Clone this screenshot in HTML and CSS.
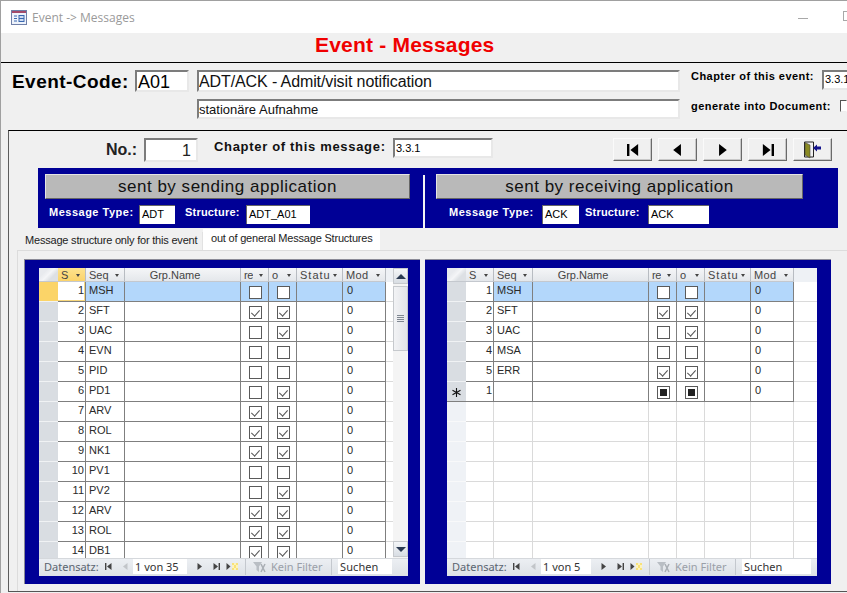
FILE: index.html
```html
<!DOCTYPE html>
<html lang="en">
<head>
<meta charset="utf-8">
<title>Event -> Messages</title>
<link rel="stylesheet" href="styles.css">
</head>
<body>
<svg class="defs" width="0" height="0" aria-hidden="true">
  <symbol id="first" viewBox="0 0 7 7"><path d="M0 0h1.400v7H0zM6.500 0v7L2 3.500z"/></symbol>
  <symbol id="prev" viewBox="0 0 5 7"><path d="M4.500 0v7L0 3.500z"/></symbol>
  <symbol id="next" viewBox="0 0 5 7"><path d="M.5 0v7L5 3.500z"/></symbol>
  <symbol id="last" viewBox="0 0 7 7"><path d="M5.600 0H7v7H5.600zM.5 0v7L5 3.500z"/></symbol>
  <symbol id="newrec" viewBox="0 0 13 7"><path d="M.5 0v7L4.500 3.500z" fill="#444"/><path d="M6 0h2v2H6zM10 0h2v2h-2zM8 2h2v3H8zM6 5h2v2H6zM10 5h2v2h-2z" fill="#f8e27a"/><path d="M8 0h2v2H8zM6 2h2v3H6zM10 2h2v3h-2zM8 5h2v2H8z" fill="#fdf3bd"/></symbol>
  <symbol id="funnel" viewBox="0 0 14 14"><path d="M1 2h9L7 6.500V12L4.500 10V6.500z" fill="#b9bec4"/><path d="M9 4l4 8M13 4l-4 8" stroke="#a9aeb4" stroke-width="1.500" fill="none"/></symbol>
</svg>
<div class="window">
  <div class="titlebar">
    <svg class="appicon" width="16" height="15" viewBox="0 0 16 15"><rect x=".5" y=".5" width="15" height="14" fill="#eef3fb" stroke="#6f7fa8"/><rect x="1" y="1" width="14" height="2" fill="#a34a6a"/><path d="M3 6h3M3 8.500h3M3 11h3" stroke="#3a68b0"/><rect x="8" y="5.500" width="5" height="6" fill="#cfdcf2" stroke="#3a68b0"/><path d="M8 8.500h5" stroke="#3a68b0"/></svg>
    <span class="wintitle">Event -&gt; Messages</span>
    <span class="minimize"></span>
    <span class="maximize"></span>
  </div>
  <header class="formhead"><h1>Event - Messages</h1></header>
  <section class="event">
    <label class="code-label">Event-Code:</label>
    <div class="field code-field">A01</div>
    <div class="desc-col">
      <div class="field desc-main">ADT/ACK - Admit/visit notification</div>
      <div class="field desc-sub">stationäre Aufnahme</div>
    </div>
    <div class="meta-col">
      <div class="meta-row"><label class="meta-label meta-ch">Chapter of this event:</label><div class="field meta-field">3.3.1</div></div>
      <div class="meta-row meta-gen"><label class="meta-label meta-doc">generate into Document:</label><span class="doc-check"></span></div>
    </div>
  </section>
  <main class="panel">
    <div class="toprow">
      <label class="no-label">No.:</label>
      <div class="field no-field">1</div>
      <label class="chap-label">Chapter of this message:</label>
      <div class="field chap-field">3.3.1</div>
      <div class="navbtns">
        <button class="btn"><svg class="bi"><use href="#first"/></svg></button>
        <button class="btn"><svg class="bi bi-s"><use href="#prev"/></svg></button>
        <button class="btn"><svg class="bi bi-s"><use href="#next"/></svg></button>
        <button class="btn"><svg class="bi"><use href="#last"/></svg></button>
        <button class="btn"><svg width="22" height="18" viewBox="0 0 22 18"><path d="M2.500 1h9v15h-9z" fill="none" stroke="#222"/><path d="M3 1.500l5 2.500v13l-5-3z" fill="#8a8a22" stroke="#444" stroke-width=".6"/><path d="M11 7l4-3.500v2h4v3h-4v2z" fill="#12128c"/></svg></button>
      </div>
    </div>
    <div class="band">
      <div class="side side-l">
        <div class="sidebtn sidebtn-l">sent by sending application</div>
        <div class="siderow">
          <label class="wlabel wl-1">Message Type:</label><div class="mini mf-1">ADT</div>
          <label class="wlabel wl-2">Structure:</label><div class="mini mf-2">ADT_A01</div>
        </div>
      </div>
      <div class="sep"></div>
      <div class="side side-r">
        <div class="sidebtn sidebtn-r">sent by receiving application</div>
        <div class="siderow siderow-r">
          <label class="wlabel wl-3">Message Type:</label><div class="mini mf-3">ACK</div>
          <label class="wlabel wl-4">Structure:</label><div class="mini mf-4">ACK</div>
        </div>
      </div>
    </div>
    <div class="tabs">
      <div class="tab">Message structure only for this event</div>
      <div class="tab tab-on">out of general Message Structures</div>
    </div>
    <div class="page">
      <div class="pane pane-l">
        <div class="grid grid-l">
          <div class="gbody">
            <table class="dt">
              <colgroup><col class="c0"><col class="c1"><col class="c2"><col class="c3"><col class="c4"><col class="c4"><col class="c5"><col class="c6"></colgroup>
              <thead><tr><th class="corner"></th><th class="th-on"><span class="h">S</span><i></i></th><th><span class="h">Seq</span><i></i></th><th class="ctr"><span class="h">Grp.Name</span></th><th><span class="h n">re</span><i></i></th><th><span class="h n">o</span><i></i></th><th><span class="h st">Statu</span><i></i></th><th><span class="h md">Mod</span><i></i></th></tr></thead>
              <tbody>
                <tr class="cur"><td class="sel sel-on"></td><td class="num num-on">1</td><td>MSH</td><td></td><td class="chk"><span class="cb"></span></td><td class="chk"><span class="cb"></span></td><td></td><td>0</td></tr>
                <tr><td class="sel"></td><td class="num">2</td><td>SFT</td><td></td><td class="chk"><span class="cb on"></span></td><td class="chk"><span class="cb on"></span></td><td></td><td>0</td></tr>
                <tr><td class="sel"></td><td class="num">3</td><td>UAC</td><td></td><td class="chk"><span class="cb"></span></td><td class="chk"><span class="cb on"></span></td><td></td><td>0</td></tr>
                <tr><td class="sel"></td><td class="num">4</td><td>EVN</td><td></td><td class="chk"><span class="cb"></span></td><td class="chk"><span class="cb"></span></td><td></td><td>0</td></tr>
                <tr><td class="sel"></td><td class="num">5</td><td>PID</td><td></td><td class="chk"><span class="cb"></span></td><td class="chk"><span class="cb"></span></td><td></td><td>0</td></tr>
                <tr><td class="sel"></td><td class="num">6</td><td>PD1</td><td></td><td class="chk"><span class="cb"></span></td><td class="chk"><span class="cb on"></span></td><td></td><td>0</td></tr>
                <tr><td class="sel"></td><td class="num">7</td><td>ARV</td><td></td><td class="chk"><span class="cb on"></span></td><td class="chk"><span class="cb on"></span></td><td></td><td>0</td></tr>
                <tr><td class="sel"></td><td class="num">8</td><td>ROL</td><td></td><td class="chk"><span class="cb on"></span></td><td class="chk"><span class="cb on"></span></td><td></td><td>0</td></tr>
                <tr><td class="sel"></td><td class="num">9</td><td>NK1</td><td></td><td class="chk"><span class="cb on"></span></td><td class="chk"><span class="cb on"></span></td><td></td><td>0</td></tr>
                <tr><td class="sel"></td><td class="num">10</td><td>PV1</td><td></td><td class="chk"><span class="cb"></span></td><td class="chk"><span class="cb"></span></td><td></td><td>0</td></tr>
                <tr><td class="sel"></td><td class="num">11</td><td>PV2</td><td></td><td class="chk"><span class="cb"></span></td><td class="chk"><span class="cb on"></span></td><td></td><td>0</td></tr>
                <tr><td class="sel"></td><td class="num">12</td><td>ARV</td><td></td><td class="chk"><span class="cb on"></span></td><td class="chk"><span class="cb on"></span></td><td></td><td>0</td></tr>
                <tr><td class="sel"></td><td class="num">13</td><td>ROL</td><td></td><td class="chk"><span class="cb on"></span></td><td class="chk"><span class="cb on"></span></td><td></td><td>0</td></tr>
                <tr><td class="sel"></td><td class="num">14</td><td>DB1</td><td></td><td class="chk"><span class="cb on"></span></td><td class="chk"><span class="cb on"></span></td><td></td><td>0</td></tr>
              </tbody>
            </table>
            <div class="filler filler-l"><div class="filler-head"></div></div>
            <div class="scroll">
              <div class="sb-btn"><span class="tri-up"></span></div>
              <div class="sb-thumb"><span class="grip"></span></div>
              <div class="sb-btn sb-down"><span class="tri-down"></span></div>
            </div>
          </div>
          <div class="gnav">
            <span class="nl">Datensatz:</span>
            <svg class="ni ni-first"><use href="#first"/></svg>
            <svg class="ni ni-prev"><use href="#prev"/></svg>
            <span class="nf nf-l">1 von 35</span>
            <svg class="ni ni-next"><use href="#next"/></svg>
            <svg class="ni ni-last"><use href="#last"/></svg>
            <svg class="ni ni-new"><use href="#newrec"/></svg>
            <span class="nsep"></span>
            <svg class="ni ni-fun"><use href="#funnel"/></svg>
            <span class="nk">Kein Filter</span>
            <span class="nsep"></span>
            <span class="ns ns-l">Suchen</span>
          </div>
        </div>
      </div>
      <div class="pane pane-r">
        <div class="grid grid-r">
          <div class="gbody">
            <table class="dt">
              <colgroup><col class="c0"><col class="c1"><col class="c2"><col class="c3"><col class="c4"><col class="c4"><col class="c5"><col class="c6"></colgroup>
              <thead><tr><th class="corner"></th><th><span class="h">S</span><i></i></th><th><span class="h">Seq</span><i></i></th><th class="ctr"><span class="h">Grp.Name</span></th><th><span class="h n">re</span><i></i></th><th><span class="h n">o</span><i></i></th><th><span class="h st">Statu</span><i></i></th><th><span class="h md">Mod</span><i></i></th></tr></thead>
              <tbody>
                <tr class="cur"><td class="sel"></td><td class="num">1</td><td>MSH</td><td></td><td class="chk"><span class="cb"></span></td><td class="chk"><span class="cb"></span></td><td></td><td>0</td></tr>
                <tr><td class="sel"></td><td class="num">2</td><td>SFT</td><td></td><td class="chk"><span class="cb on"></span></td><td class="chk"><span class="cb on"></span></td><td></td><td>0</td></tr>
                <tr><td class="sel"></td><td class="num">3</td><td>UAC</td><td></td><td class="chk"><span class="cb"></span></td><td class="chk"><span class="cb on"></span></td><td></td><td>0</td></tr>
                <tr><td class="sel"></td><td class="num">4</td><td>MSA</td><td></td><td class="chk"><span class="cb"></span></td><td class="chk"><span class="cb"></span></td><td></td><td>0</td></tr>
                <tr><td class="sel"></td><td class="num">5</td><td>ERR</td><td></td><td class="chk"><span class="cb on"></span></td><td class="chk"><span class="cb on"></span></td><td></td><td>0</td></tr>
                <tr><td class="sel star"><svg class="star-i" width="9" height="9" viewBox="0 0 9 9"><path d="M4.500 0v9M.5 2.200l8 4.600M8.500 2.200l-8 4.600" stroke="#111" stroke-width="1.100" fill="none"/></svg></td><td class="num">1</td><td></td><td></td><td class="chk"><span class="cb mix"></span></td><td class="chk"><span class="cb mix"></span></td><td></td><td>0</td></tr>
                <tr class="blank"><td class="sel"></td><td></td><td></td><td></td><td></td><td></td><td></td><td></td></tr>
                <tr class="blank"><td class="sel"></td><td></td><td></td><td></td><td></td><td></td><td></td><td></td></tr>
                <tr class="blank"><td class="sel"></td><td></td><td></td><td></td><td></td><td></td><td></td><td></td></tr>
                <tr class="blank"><td class="sel"></td><td></td><td></td><td></td><td></td><td></td><td></td><td></td></tr>
                <tr class="blank"><td class="sel"></td><td></td><td></td><td></td><td></td><td></td><td></td><td></td></tr>
                <tr class="blank"><td class="sel"></td><td></td><td></td><td></td><td></td><td></td><td></td><td></td></tr>
                <tr class="blank"><td class="sel"></td><td></td><td></td><td></td><td></td><td></td><td></td><td></td></tr>
                <tr class="blank"><td class="sel"></td><td></td><td></td><td></td><td></td><td></td><td></td><td></td></tr>
              </tbody>
            </table>
            <div class="filler"><div class="filler-head"></div></div>
          </div>
          <div class="gnav">
            <span class="nl">Datensatz:</span>
            <svg class="ni ni-first"><use href="#first"/></svg>
            <svg class="ni ni-prev"><use href="#prev"/></svg>
            <span class="nf nf-r">1 von 5</span>
            <svg class="ni ni-next"><use href="#next"/></svg>
            <svg class="ni ni-last"><use href="#last"/></svg>
            <svg class="ni ni-new"><use href="#newrec"/></svg>
            <span class="nsep"></span>
            <svg class="ni ni-fun"><use href="#funnel"/></svg>
            <span class="nk">Kein Filter</span>
            <span class="nsep"></span>
            <span class="ns ns-r">Suchen</span>
          </div>
        </div>
      </div>
    </div>
  </main>
</div>
</body>
</html>
```
FILE: styles.css
```css
* { box-sizing: border-box; }
html, body { margin: 0; padding: 0; }
body { width: 847px; height: 593px; overflow: hidden; background: #f0f0f0; font-family: "Liberation Sans", Arial, sans-serif; color: #000; }
.defs { display: block; height: 0; }
.window { width: 847px; height: 593px; overflow: hidden; border-top: 1px solid #a0a0a0; border-left: 1px solid #a0a0a0; background: #f0f0f0; }

.titlebar { height: 32px; background: #fff; display: flex; align-items: center; padding-left: 10px; }
.titlebar > * { flex: none; }
.wintitle { margin-left: 5px; font: 12px "Open Sans", sans-serif; color: #9a9a9a; width: 766px; margin-top: 1px; }
.minimize { width: 10px; height: 1px; background: #a8a8a8; margin-left: 0; margin-top: 2px; }
.maximize { width: 10px; height: 10px; border: 1px solid #a8a8a8; margin-left: 35px; margin-top: -2px; }

.formhead { height: 30px; border-bottom: 1px solid #000; padding-left: 314px; background: #f0f0f0; }
.formhead h1 { margin: 0; font-size: 21px; line-height: 23px; letter-spacing: .2px; font-weight: bold; color: #f00000; }

.event { height: 67px; display: flex; padding: 7px 0 0 11px; align-items: flex-start; }
.event > * { flex: none; }
.field { background: #fff; border: 2px solid; border-color: #7c7c7c #e8e8e8 #e8e8e8 #7c7c7c; white-space: nowrap; overflow: hidden; flex: none; }
.code-label { width: 123px; font-weight: bold; font-size: 19px; letter-spacing: .45px; line-height: 24px; }
.code-field { width: 54px; height: 22px; font-size: 18px; line-height: 21px; padding-left: 1px; }
.desc-col { margin-left: 8px; width: 483px; display: flex; flex-direction: column; gap: 7px; }
.desc-main { height: 22px; font-size: 16px; line-height: 20px; letter-spacing: -.11px; color: #111; }
.desc-sub { height: 20px; font-size: 13px; line-height: 18px; color: #111; }
.meta-col { margin-left: 11px; width: 156px; display: flex; flex-direction: column; }
.meta-row { display: flex; }
.meta-row > * { flex: none; }
.meta-gen { margin-top: 10px; }
.meta-label { font-size: 11px; font-weight: bold; line-height: 13px; letter-spacing: .45px; white-space: nowrap; }
.meta-ch { width: 131px; }
.meta-doc { width: 149px; }
.meta-field { width: 25px; height: 20px; font-size: 11px; line-height: 15px; padding-left: 1px; border-right: 0; }
.doc-check { width: 7px; height: 12px; background: #fff; border: 1px solid; border-color: #555 transparent #eee #555; }

.panel { margin-left: 7px; height: 462px; border-left: 1px solid #5c5c5c; border-top: 1px solid #000; border-bottom: 1px solid #555; background: #f0f0f0; }
.toprow { height: 37px; padding: 7px 0 0 97px; display: flex; align-items: flex-start; }
.toprow > * { flex: none; }
.no-label { width: 38px; font-size: 16px; font-weight: bold; line-height: 23px; color: #222; }
.no-field { width: 54px; height: 24px; font-size: 16px; line-height: 22px; text-align: right; padding-right: 5px; color: #222; }
.chap-label { margin-left: 16px; width: 179px; font-size: 13px; font-weight: bold; letter-spacing: .68px; line-height: 17px; white-space: nowrap; color: #111; }
.chap-field { width: 100px; height: 20px; font-size: 11px; line-height: 17px; padding-left: 1px; }
.navbtns { margin-left: 120px; display: flex; gap: 6px; }
.btn { width: 39px; height: 23px; padding: 0; background: #f0f0f0; border: 1px solid; border-color: #fafafa #6a6a6a #6a6a6a #fafafa; box-shadow: inset -1px -1px 0 #c8c8c8; display: flex; align-items: center; justify-content: center; }
.bi { width: 12px; height: 12px; fill: #000; }
.bi-s { width: 9px; }

.band { margin-left: 29px; width: 800px; height: 60px; background: #000096; display: flex; }
.side { padding-top: 6px; flex: none; }
.side-l { width: 385px; padding-left: 7px; }
.side-r { width: 413px; padding-left: 11px; }
.sep { width: 2px; height: 53px; margin-top: 7px; background: #f4f4f4; flex: none; }
.sidebtn { height: 25px; background: #b9b9b9; border: 1px solid; border-color: #e4e4e4 #666 #666 #e4e4e4; text-align: center; font-size: 17px; line-height: 23px; letter-spacing: .52px; color: #111; }
.sidebtn-l { width: 365px; }
.sidebtn-r { width: 367px; }
.siderow { margin-top: 6px; padding-left: 4px; display: flex; height: 19px; }
.siderow > * { flex: none; }
.siderow-r { padding-left: 13px; }
.wlabel { font-size: 11px; font-weight: bold; color: #fff; line-height: 15px; letter-spacing: .5px; white-space: nowrap; }
.wl-1 { width: 90px; }
.wl-2 { width: 61px; margin-left: 10px; letter-spacing: .2px; }
.wl-3 { width: 93px; }
.wl-4 { width: 63px; margin-left: 6px; letter-spacing: .2px; }
.mini { height: 19px; background: #fff; border-left: 1px solid #666; border-top: 1px solid #666; font-size: 11px; line-height: 17px; padding-left: 2px; }
.mf-1 { width: 36px; }
.mf-2 { width: 64px; }
.mf-3 { width: 37px; }
.mf-4 { width: 61px; }

.tabs { height: 22px; margin-left: 11px; display: flex; align-items: flex-end; }
.tab { flex: none; width: 183px; height: 18px; font-size: 11px; letter-spacing: -.2px; line-height: 17px; padding-left: 5px; white-space: nowrap; color: #222; border-right: 1px solid #e2e2e2; }
.tab-on { width: 177px; height: 21px; background: #fff; line-height: 19px; padding-left: 8px; border-right: 0; }

.page { margin-left: 8px; height: 341px; border-top: 1px solid #dcdcdc; border-left: 1px solid #dcdcdc; display: flex; gap: 5px; padding: 8px 0 0 6px; }
.pane { height: 325px; flex: none; background: #000096; border-top: 1px solid #8a8a96; padding-top: 8px; }
.pane-l { width: 396px; border-left: 1px solid #8a8a96; padding-left: 14px; }
.pane-r { width: 406px; padding-left: 22px; }
.grid { height: 308px; background: #fff; display: flex; flex-direction: column; }
.grid-l { width: 369px; }
.grid-r { width: 370px; }
.gbody { height: 290px; flex: none; overflow: hidden; display: flex; align-items: flex-start; background-image: linear-gradient(to top, #dadada 1px, transparent 1px); background-size: 100% 20px; background-position: 0 14px; }

.dt { width: 347px; border-collapse: separate; border-spacing: 0; table-layout: fixed; flex: none; font-size: 11px; color: #2a2a2a; }
.c0 { width: 19px; }
.c1 { width: 28px; }
.c2 { width: 39px; }
.c3 { width: 116px; }
.c4 { width: 28px; }
.c5 { width: 46px; }
.c6 { width: 43px; }
.dt th { position: relative; height: 14px; padding: 0 0 0 3px; font-weight: normal; font-size: 11px; line-height: 13px; text-align: left; background: linear-gradient(#f5f6f8, #e4e7eb); border-right: 1px solid #b8bcc2; border-bottom: 1px solid #c4c8ce; color: #444; white-space: nowrap; overflow: hidden; }
.dt th.ctr { text-align: center; padding: 0 15px 0 0; }
.dt th i { position: absolute; right: 5px; top: 6px; width: 0; height: 0; border: 2.500px solid transparent; border-top: 3px solid #444; border-bottom: 0; }
.dt th .h { display: block; height: 12px; overflow: hidden; }
.dt th .h.n { letter-spacing: -.3px; width: 9px; }
.dt th .h.st { letter-spacing: 1px; }
.dt th .h.md { letter-spacing: .3px; }
.dt th.th-on { background: linear-gradient(#fde28e, #fbd36a); }
.dt th.corner { background: linear-gradient(135deg, #e8eaee 30%, #f4f5f7 50%, #dde0e4 70%); border-right: 0; padding: 0; }
.dt td { height: 20px; padding: 0 0 3px 3px; border-right: 1px solid #7f7f7f; border-bottom: 1px solid #7f7f7f; white-space: nowrap; overflow: hidden; line-height: 14px; background: #fff; }
.dt td:last-child { padding-left: 4px; }
.dt td.sel { background: #d9dde2; border-right: 0; border-bottom: 1px solid #f0f2f4; padding: 0; text-align: center; }
.dt td.sel-on { background: #fbd468; }
.dt td.num { text-align: right; padding: 0 1px 3px 0; }
.dt td.num-on { box-shadow: inset -1px -1px 0 #f7d77c; }
.dt td.star { border-bottom-color: #7f7f7f; }
.star-i { display: block; margin: 1px auto 0; }
.dt tr.cur td { background: #b3d7fb; }
.dt tr.cur td.sel { background: #d9dde2; }
.dt tr.cur td.sel-on { background: #fbd468; }
.dt tr.cur td.num { background: #fff; }
.dt tr.blank td { border-color: #dadada; background: #fff; }
.dt tr.blank td.sel { background: #eff2f6; border-color: #f8f9fa; }
.dt td.chk { padding: 4px 0 0 1px; vertical-align: top; }
.cb { display: block; position: relative; width: 13px; height: 13px; margin: 0 auto; border: 1px solid #5a5a5a; background: #fff; }
.cb.on::after { content: ""; position: absolute; left: 3.500px; top: 1px; width: 4px; height: 7px; border-right: 1.200px solid #555; border-bottom: 1.200px solid #555; transform: rotate(42deg); }
.cb.mix::after { content: ""; position: absolute; left: 2px; top: 2px; width: 7px; height: 7px; background: #222; }

.filler { flex: 1 1 auto; min-width: 0; }
.filler-l { flex: 0 0 7px; }
.filler-head { height: 14px; background: #eef1f5; }
.scroll { flex: 0 0 15px; margin-left: auto; background: #f4f4f4; display: flex; flex-direction: column; height: 290px; }
.sb-btn { height: 16px; flex: none; background: linear-gradient(#f4f6f8, #d8dde3); border: 1px solid #c6c9cd; display: flex; align-items: center; justify-content: center; }
.sb-down { margin-top: auto; margin-bottom: 1px; }
.tri-up { width: 0; height: 0; border: 5px solid transparent; border-top: 0; border-bottom: 5px solid #2a3a52; }
.tri-down { width: 0; height: 0; border: 5px solid transparent; border-bottom: 0; border-top: 5px solid #2a3a52; }
.sb-thumb { margin-top: 2px; height: 65px; flex: none; background: linear-gradient(90deg, #f2f3f5, #e2e4e8); border: 1px solid #c6c9cd; display: flex; align-items: center; justify-content: center; }
.grip { width: 7px; height: 7px; background: repeating-linear-gradient(#7e8690 0 1px, transparent 1px 2px); }

.gnav { height: 18px; flex: none; display: flex; align-items: center; padding: 0 0 2px 5px; background: linear-gradient(#eceff3, #dde1e6); font: 11px "Noto Sans", sans-serif; color: #666; border-top: 1px solid #d5d8dc; }
.gnav > * { flex: none; }
.nl { width: 60px; color: #5a6470; white-space: nowrap; }
.ni { height: 7px; fill: #444; }
.ni-first { width: 7px; margin-left: 1px; margin-right: 11px; }
.ni-prev { width: 5px; fill: #c2c5c9; margin-right: 5px; }
.ni-next { width: 5px; margin-left: 10px; margin-right: 11px; }
.ni-last { width: 7px; margin-right: 6px; }
.ni-new { width: 13px; margin-right: 6px; }
.ni-fun { width: 14px; height: 14px; margin-right: 5px; }
.nf, .ns { height: 15px; background: #fff; color: #333; line-height: 15px; padding-left: 2px; white-space: nowrap; }
.nf-l { width: 54px; }
.nf-r { width: 50px; }
.ns { letter-spacing: .1px; }
.ns-l { width: 54px; }
.ns-r { width: 69px; }
.nk { width: 60px; color: #9aa0a8; white-space: nowrap; }
.nsep { width: 7px; height: 16px; border-left: 1px solid #c4c8ce; }
```
